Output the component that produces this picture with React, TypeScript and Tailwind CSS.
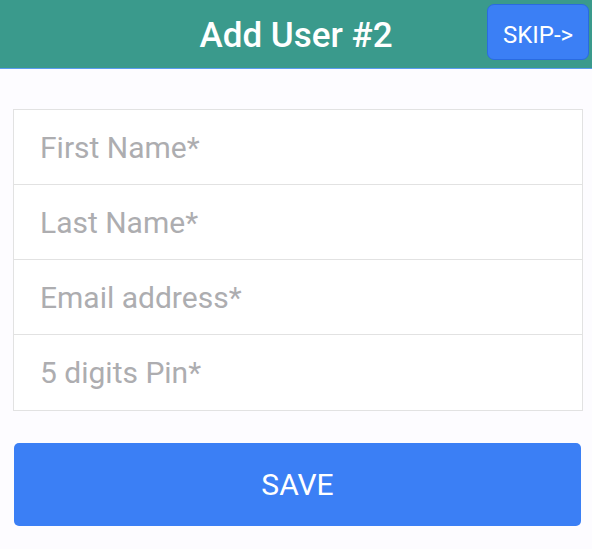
import React from "react";

const fields = ["First Name*", "Last Name*", "Email address*", "5 digits Pin*"];

export default function App() {
  return (
    <div className="w-[592px] h-[549px] bg-[#fdfcff] font-['Roboto',sans-serif]">
      <div className="relative h-[69px] bg-[#3a9a8c] border-b border-[#5a9cf0] flex items-center justify-center">
        <h1 className="text-white text-[35px] font-medium pt-[5px]">Add User #2</h1>
        <button className="absolute right-[3px] top-[4px] w-[102px] h-[56px] pt-[6px] bg-[#3b7ff5] border border-[#2a6be0] rounded-[7px] text-white text-[24px]">
          SKIP-&gt;
        </button>
      </div>

      <div className="mt-[40px] ml-[13px] w-[570px] border border-[#e2e2e2] bg-white">
        {fields.map((f, i) => (
          <div
            key={f}
            className={`h-[75px] flex items-center pl-[26px] text-[30px] text-[#adadb0] ${
              i < fields.length - 1 ? "border-b border-[#e2e2e2]" : ""
            }`}
          >
            {f}
          </div>
        ))}
      </div>

      <button className="mt-[32px] ml-[14px] w-[567px] h-[83px] bg-[#3b7ff5] rounded-[5px] text-white text-[30px]">
        SAVE
      </button>
    </div>
  );
}
